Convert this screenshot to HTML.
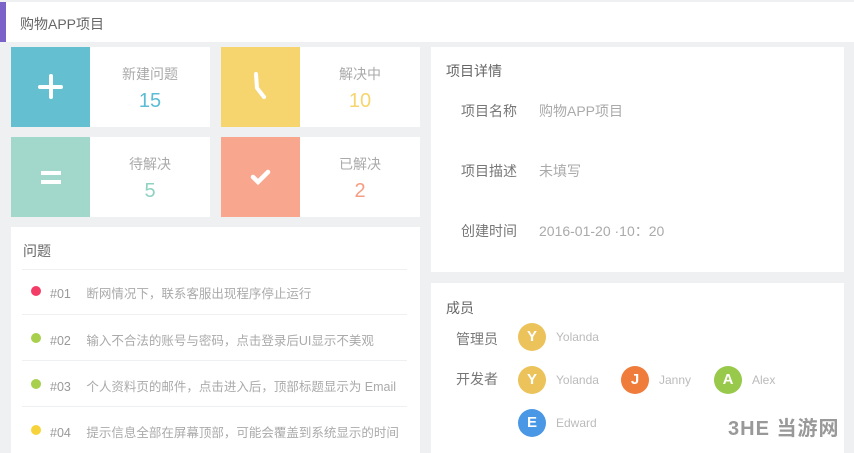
<!DOCTYPE html>
<html><head><meta charset="utf-8"><style>
*{margin:0;padding:0;box-sizing:border-box}
body{width:854px;height:453px;overflow:hidden;background:#eef0f2;font-family:"Liberation Sans","Noto Sans CJK SC",sans-serif;position:relative;color:#666}
.a{position:absolute}
.w{background:#fff}
.ic{position:absolute;left:0;top:0;width:79px;height:80px}
.lb{position:absolute;left:79px;right:0;text-align:center;top:17px;font-size:14px;color:#aaa}
.nm{position:absolute;left:79px;right:0;text-align:center;top:43px;font-size:20px}
.sep{position:absolute;left:22px;width:385px;height:1px;background:#eef0f2}
.dot{position:absolute;width:10px;height:10px;border-radius:50%;left:31px}
.it{position:absolute;left:50px;font-size:12.5px;color:#aaa;white-space:nowrap}
.it b{font-weight:normal;color:#999;margin-right:12px}
.av{position:absolute;width:28px;height:28px;border-radius:50%;color:#fff;font-weight:bold;font-size:15px;text-align:center;line-height:28px}
.n{position:absolute;font-size:12px;color:#bbb}
</style></head><body>
<div class="a w" style="left:0;top:2px;width:854px;height:40px"></div>
<div class="a" style="left:0;top:2px;width:6px;height:40px;background:#7b62c9"></div>
<div class="a" style="left:20px;top:14px;font-size:14px;color:#666">购物APP项目</div>

<div class="a w" style="left:11px;top:47px;width:199px;height:80px">
<div class="ic" style="background:#64bfd1"><div class="a" style="left:27px;top:38px;width:25px;height:4px;background:#fff;border-radius:2px"></div><div class="a" style="left:38px;top:27px;width:4px;height:25px;background:#fff;border-radius:2px"></div></div>
<div class="lb">新建问题</div><div class="nm" style="color:#5bbcd3">15</div></div>
<div class="a w" style="left:221px;top:47px;width:199px;height:80px">
<div class="ic" style="background:#f6d56f"><svg width="79" height="80"><path d="M35 27 L36 41 L43 50" stroke="#fff" stroke-width="4" fill="none" stroke-linecap="round"/></svg></div>
<div class="lb">解决中</div><div class="nm" style="color:#f6d56f">10</div></div>
<div class="a w" style="left:11px;top:137px;width:199px;height:80px">
<div class="ic" style="background:#a2d8cb"><div class="a" style="left:30px;top:34px;width:20px;height:4px;background:#fff"></div><div class="a" style="left:30px;top:43px;width:20px;height:4px;background:#fff"></div></div>
<div class="lb">待解决</div><div class="nm" style="color:#8fd2c2">5</div></div>
<div class="a w" style="left:221px;top:137px;width:199px;height:80px">
<div class="ic" style="background:#f9a68f"><svg width="79" height="80"><path d="M32 40 L37 45 L47 35" stroke="#fff" stroke-width="4.5" fill="none" stroke-linecap="round"/></svg></div>
<div class="lb">已解决</div><div class="nm" style="color:#f59d82">2</div></div>

<div class="a w" style="left:11px;top:227px;width:409px;height:226px">
<div class="a" style="left:12px;top:14px;font-size:14px;color:#666">问题</div>
<div class="sep" style="top:42px;left:11px"></div><div class="sep" style="top:87px;left:11px"></div><div class="sep" style="top:133px;left:11px"></div><div class="sep" style="top:179px;left:11px"></div>
</div>
<div class="dot" style="top:286px;background:#f33c66"></div><div class="it" style="top:283px"><b>#01</b> 断网情况下，联系客服出现程序停止运行</div>
<div class="dot" style="top:333px;background:#a8d04d"></div><div class="it" style="top:330px"><b>#02</b> 输入不合法的账号与密码，点击登录后UI显示不美观</div>
<div class="dot" style="top:379px;background:#a8d04d"></div><div class="it" style="top:376px"><b>#03</b> 个人资料页的邮件，点击进入后，顶部标题显示为 Email</div>
<div class="dot" style="top:425px;background:#f6d33a"></div><div class="it" style="top:422px"><b>#04</b> 提示信息全部在屏幕顶部，可能会覆盖到系统显示的时间</div>

<div class="a w" style="left:431px;top:47px;width:413px;height:225px">
<div class="a" style="left:15px;top:14px;font-size:14px;color:#666">项目详情</div>
<div class="a" style="left:30px;top:54px;font-size:14px;color:#777">项目名称</div><div class="a" style="left:108px;top:54px;font-size:14px;color:#aaa">购物APP项目</div>
<div class="a" style="left:30px;top:114px;font-size:14px;color:#777">项目描述</div><div class="a" style="left:108px;top:114px;font-size:14px;color:#aaa">未填写</div>
<div class="a" style="left:30px;top:174px;font-size:14px;color:#777">创建时间</div><div class="a" style="left:108px;top:174px;font-size:14px;color:#aaa">2016-01-20 ·10：20</div>
</div>
<div class="a w" style="left:431px;top:283px;width:413px;height:170px">
<div class="a" style="left:15px;top:15px;font-size:14px;color:#666">成员</div>
<div class="a" style="left:25px;top:46px;font-size:14px;color:#777">管理员</div>
<div class="a" style="left:25px;top:86px;font-size:14px;color:#777">开发者</div>
</div>
<div class="av" style="left:518px;top:323px;background:#ecc35b">Y</div><div class="n" style="left:556px;top:330px">Yolanda</div>
<div class="av" style="left:518px;top:366px;background:#ecc35b">Y</div><div class="n" style="left:556px;top:373px">Yolanda</div>
<div class="av" style="left:621px;top:366px;background:#ef7c3a">J</div><div class="n" style="left:659px;top:373px">Janny</div>
<div class="av" style="left:714px;top:366px;background:#98c94b">A</div><div class="n" style="left:752px;top:373px">Alex</div>
<div class="av" style="left:518px;top:409px;background:#4a97e6">E</div><div class="n" style="left:556px;top:416px">Edward</div>
<div class="a" style="left:728px;top:412px;font-size:20px;font-weight:bold;color:#999;letter-spacing:1px">3HE 当游网</div>
</body></html>
